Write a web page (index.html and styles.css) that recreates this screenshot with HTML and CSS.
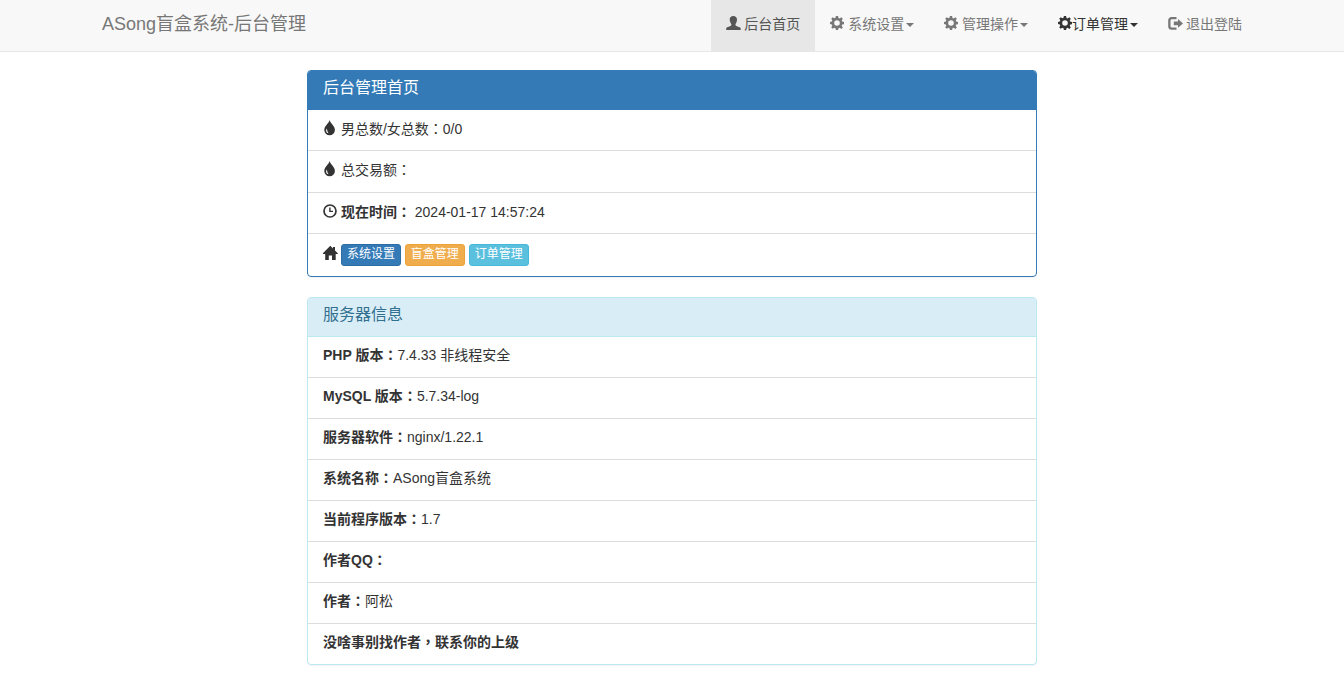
FILE: index.html
```html
<!DOCTYPE html>
<html lang="zh-CN">
<head>
<meta charset="utf-8">
<meta name="viewport" content="width=device-width, initial-scale=1">
<title>ASong盲盒系统-后台管理</title>
<link rel="stylesheet" href="styles.css">
</head>
<body>
<svg class="sprite" aria-hidden="true">
  <symbol id="i-user" viewBox="0 0 14 14" overflow="visible"><path d="M7.300 0C9.500 0 11 1.300 11 3.300c0 1.200-.2 2.300-.6 3.200-.3.700-.8 1.200-1 1.800-.1.800.2 1.300.9 1.600l3.200 1.400c.9.400 1.200.7 1.200 1.400V14H.2v-1.300c0-.7.3-1 1.100-1.400l3.200-1.400c.7-.3 1-.8.9-1.600-.2-.6-.7-1.100-1-1.800-.4-.9-.7-2-.7-3.200C3.700 1.300 5.100 0 7.300 0Z"/></symbol>
  <symbol id="i-cog" viewBox="0 0 14 14" overflow="visible"><path fill-rule="evenodd" d="M5.900 0h2.200l.4 1.900 1.200.5 1.600-1.100 1.500 1.500-1.100 1.600.5 1.200 1.800.4v2.200l-1.800.4-.5 1.200 1.100 1.600-1.500 1.500-1.600-1.100-1.200.5L8.100 14H5.900l-.4-1.800-1.200-.5-1.600 1.100-1.500-1.500 1.100-1.600-.5-1.200L0 8.100V5.900l1.800-.4.5-1.200-1.100-1.600 1.500-1.500 1.600 1.100 1.200-.5ZM7 4.200A2.800 2.800 0 1 0 7 9.800 2.800 2.800 0 0 0 7 4.200Z"/></symbol>
  <symbol id="i-out" viewBox="0 0 14 14" overflow="visible"><path d="M8.500 1v2.200H4Q2.500 3.200 2.500 4.600v5.600q0 1.400 1.500 1.400h4.500v2.200H3.700Q.2 13.800.2 10.300V4.500Q.2 1 3.700 1Z"/><path d="M10 3 15 7.400 10 11.800V9.200H5.800V5.600H10Z"/></symbol>
  <symbol id="i-tint" viewBox="0 0 14 14" overflow="visible"><path fill-rule="evenodd" d="M6.600-1c.8 3.500 5.300 5.800 5.300 9.900a5.300 5.300 0 0 1-10.600 0C1.300 4.800 5.900 2.500 6.600-1ZM3.900 7.400c-1.500 2.100-.6 4.500 1.700 4.800-1-1.300-1.400-2.800-1.700-4.800Z"/></symbol>
  <symbol id="i-time" viewBox="0 0 14 14" overflow="visible"><circle cx="7" cy="7" r="6" fill="none" stroke="currentColor" stroke-width="1.700"/><path d="M6.200 3.500h1.400v3.300H10V8H6.200Z"/></symbol>
  <symbol id="i-home" viewBox="0 0 14 14" overflow="visible"><path d="M7.300-.2 10 2.500V1h2v3.500L14.800 7.300v.7h-2.100V14H9V9.500H5.800V14H2.200V8H-.1V7.300Z"/></symbol>
</svg>
<header class="navbar">
  <div class="container">
    <a class="brand" href="#">ASong盲盒系统-后台管理</a>
    <nav class="nav">
      <a class="nav-link active" href="#"><svg class="icon"><use href="#i-user"/></svg> 后台首页</a>
      <a class="nav-link" href="#"><svg class="icon"><use href="#i-cog"/></svg> 系统设置<b class="caret"></b></a>
      <a class="nav-link" href="#"><svg class="icon"><use href="#i-cog"/></svg> 管理操作<b class="caret"></b></a>
      <a class="nav-link dark" href="#"><svg class="icon"><use href="#i-cog"/></svg>订单管理<b class="caret"></b></a>
      <a class="nav-link" href="#"><svg class="icon"><use href="#i-out"/></svg> 退出登陆</a>
    </nav>
  </div>
</header>
<main class="content">
  <section class="panel primary">
    <h3 class="panel-title">后台管理首页</h3>
    <ul class="list">
      <li><svg class="icon"><use href="#i-tint"/></svg> 男总数/女总数<span class="punct" lang="zh-TW">：</span>0/0</li>
      <li class="roomy"><svg class="icon"><use href="#i-tint"/></svg> 总交易额<span class="punct" lang="zh-TW">：</span></li>
      <li><svg class="icon"><use href="#i-time"/></svg> <b>现在时间<span class="punct" lang="zh-TW">：</span></b> 2024-01-17 14:57:24</li>
      <li class="actions"><svg class="icon"><use href="#i-home"/></svg> <a class="btn blue" href="#">系统设置</a> <a class="btn orange" href="#">盲盒管理</a> <a class="btn cyan" href="#">订单管理</a></li>
    </ul>
  </section>
  <section class="panel info">
    <h3 class="panel-title">服务器信息</h3>
    <ul class="list">
      <li><b>PHP 版本<span class="punct" lang="zh-TW">：</span></b>7.4.33 非线程安全</li>
      <li><b>MySQL 版本<span class="punct" lang="zh-TW">：</span></b>5.7.34-log</li>
      <li><b>服务器软件<span class="punct" lang="zh-TW">：</span></b>nginx/1.22.1</li>
      <li><b>系统名称<span class="punct" lang="zh-TW">：</span></b>ASong盲盒系统</li>
      <li><b>当前程序版本<span class="punct" lang="zh-TW">：</span></b>1.7</li>
      <li><b>作者QQ<span class="punct" lang="zh-TW">：</span></b></li>
      <li><b>作者<span class="punct" lang="zh-TW">：</span></b>阿松</li>
      <li><b>没啥事别找作者<span class="punct" lang="zh-TW">，</span>联系你的上级</b></li>
    </ul>
  </section>
</main>
</body>
</html>
```

FILE: styles.css
```css
* { box-sizing: border-box; }
body {
  margin: 0;
  background: #fff;
  color: #333;
  font: 14px/20px "Liberation Sans", "Noto Sans CJK SC", sans-serif;
}
a { text-decoration: none; }
.sprite { position: absolute; width: 0; height: 0; }
.navbar { background: #f8f8f8; border-bottom: 1px solid #e7e7e7; }
.container {
  display: flex;
  flex-wrap: wrap;
  justify-content: space-between;
  max-width: 1170px;
  margin: 0 auto;
}
.brand { padding: 14px 15px 16px; font-size: 18px; color: #777; }
.nav { display: flex; flex-wrap: wrap; }
.nav-link { padding: 14px 15px 17px; color: #777; white-space: nowrap; }
.nav-link.active { background: #e7e7e7; color: #555; }
.nav-link.dark { color: #333; }
.icon {
  width: 14px;
  height: 14px;
  fill: currentColor;
  overflow: visible;
  vertical-align: -1px;
}
.caret {
  display: inline-block;
  margin-left: 2px;
  border: 4px solid transparent;
  border-top-color: currentColor;
  border-bottom: 0;
  vertical-align: middle;
}
.content { max-width: 760px; margin: 0 auto; padding: 18px 15px 0; }
.panel {
  margin-bottom: 20px;
  border: 1px solid;
  border-radius: 4px;
  box-shadow: 0 1px 1px rgba(0, 0, 0, 0.05);
  overflow: hidden;
}
.panel.primary { border-color: #337ab7; }
.panel.info { border-color: #bce8f1; }
.panel-title {
  margin: 0;
  padding: 7px 15px 11px;
  font-size: 16px;
  font-weight: 400;
  line-height: 20px;
  border-bottom: 1px solid;
}
.primary .panel-title { background: #337ab7; border-color: #337ab7; color: #fff; }
.info .panel-title { background: #d9edf7; border-color: #bce8f1; color: #31708f; }
.list { margin: 0; padding: 0; list-style: none; }
.list li { padding: 9px 15px 11px; border-bottom: 1px solid #ddd; }
.info .list li { padding: 8px 15px 12px; }
.list li.roomy { padding-bottom: 12px; }
.list li.actions { padding: 10px 15px; }
.list li:last-child { border-bottom: 0; }
.punct { font-family: "Noto Sans CJK TC", sans-serif; line-height: 1; }
.btn {
  display: inline-block;
  padding: 0 5px 2px;
  border: 1px solid;
  border-radius: 3px;
  color: #fff;
  font-size: 12px;
  line-height: 18px;
  vertical-align: middle;
}
.blue { background: #337ab7; border-color: #2e6da4; }
.orange { background: #f0ad4e; border-color: #eea236; }
.cyan { background: #5bc0de; border-color: #46b8da; }
```
